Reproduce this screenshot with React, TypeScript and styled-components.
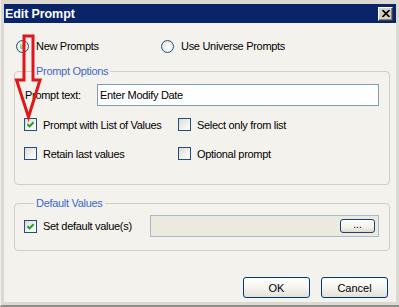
import React from 'react';
import styled, { createGlobalStyle } from 'styled-components';

const GlobalStyle = createGlobalStyle`
  html, body {
    margin: 0;
    padding: 0;
    background: #e6e4de;
  }
  body {
    font-family: "Liberation Sans", Arial, sans-serif;
    font-size: 11px;
    letter-spacing: -0.3px;
    color: #000;
  }
`;

const Frame = styled.div`
  position: relative;
  width: 399px;
  height: 307px;
  box-sizing: border-box;
  padding: 4px 3px 3px 3px;
  display: flex;
  flex-direction: column;
  background: #dcd9d2;
  border-left: 1px solid #eeeeea;
  border-bottom: 2px solid #8f8d88;
`;

const TitleBar = styled.div`
  height: 19px;
  flex: none;
  display: flex;
  align-items: center;
  justify-content: space-between;
  background: #0a246a;
  padding: 0 3px 0 1px;
`;

const Title = styled.span`
  color: #fff;
  font-weight: bold;
  font-size: 12.5px;
  letter-spacing: -0.1px;
`;

const CloseButton = styled.button`
  width: 15px;
  height: 14px;
  padding: 0;
  box-sizing: border-box;
  display: flex;
  align-items: center;
  justify-content: center;
  background: #d4d0c8;
  border: 1px solid;
  border-color: #fff #404040 #404040 #fff;
  box-shadow: inset -1px -1px #808080;
`;

const Body = styled.div`
  flex: 1;
  display: flex;
  flex-direction: column;
  background: #f4f2ed;
  padding: 16px 6px 0 10px;
`;

const RadioRow = styled.div`
  display: grid;
  grid-template-columns: 145px auto;
  height: 14px;
  padding-left: 2px;
`;

const Option = styled.label`
  display: flex;
  align-items: center;
  gap: 7px;
  white-space: nowrap;
`;

const RadioCircle = styled.span<{ $checked?: boolean }>`
  width: 13px;
  height: 13px;
  box-sizing: border-box;
  border-radius: 50%;
  border: 1px solid #1c5180;
  background: radial-gradient(circle at 60% 60%, #ffffff 0%, #e4e2da 80%);
  display: flex;
  align-items: center;
  justify-content: center;
  flex: none;

  &::after {
    content: '';
    display: ${({ $checked }) => ($checked ? 'block' : 'none')};
    width: 5px;
    height: 5px;
    border-radius: 50%;
    background: radial-gradient(circle at 40% 40%, #c8e8a0, #4fa33a);
  }
`;

const Box = styled.span`
  width: 13px;
  height: 13px;
  box-sizing: border-box;
  border: 1px solid #1c5180;
  background: linear-gradient(135deg, #dcdad2 0%, #f7f6f2 70%, #ffffff 100%);
  display: flex;
  align-items: center;
  justify-content: center;
  flex: none;
`;

const GroupBox = styled.fieldset<{ $top: number; $bottom: number }>`
  margin: 0;
  margin-top: ${({ $top }) => $top}px;
  padding: 0 10px ${({ $bottom }) => $bottom}px 9px;
  border: 1px solid #d0d0bf;
  border-radius: 4px;
  min-width: 0;
`;

const Legend = styled.legend`
  margin-left: 10px;
  padding: 0 2px;
  line-height: 13px;
  color: #3d67c9;
`;

const FieldRow = styled.div<{ $label: number; $pad: number }>`
  display: grid;
  grid-template-columns: ${({ $label }) => $label}px 1fr;
  align-items: center;
  margin-top: ${({ $pad }) => $pad}px;
  height: 22px;
`;

const LabelText = styled.span`
  padding-left: 1px;
`;

const TextField = styled.div`
  height: 22px;
  box-sizing: border-box;
  border: 1px solid #7f9db9;
  background: #fff;
  padding: 0 2px;
  display: flex;
  align-items: center;
`;

const DisabledField = styled.div`
  height: 22px;
  box-sizing: border-box;
  border: 1px solid #a9b9c9;
  background: #ece9df;
  padding: 3px;
  display: flex;
  justify-content: flex-end;
`;

const DotsButton = styled.button`
  width: 35px;
  height: 14px;
  box-sizing: border-box;
  padding: 0 0 2px 0;
  border: 1px solid #1e3f6f;
  border-radius: 3px;
  background: linear-gradient(#ffffff, #f2f1ea 60%, #dedbd0);
  font: inherit;
  font-size: 10px;
  line-height: 10px;
  display: flex;
  align-items: flex-end;
  justify-content: center;
`;

const CheckGrid = styled.div`
  display: grid;
  grid-template-columns: 154px 1fr;
  row-gap: 16px;
  margin-top: 12px;
`;

const CheckOption = styled(Option)`
  height: 13px;
  gap: 6px;
`;

const ButtonRow = styled.div`
  display: flex;
  justify-content: flex-end;
  gap: 11px;
  margin-top: 26px;
  margin-right: 2px;
`;

const PushButton = styled.button`
  width: 67px;
  height: 21px;
  box-sizing: border-box;
  border: 1px solid #003c74;
  border-radius: 3px;
  background: linear-gradient(#ffffff 0%, #f5f4ef 50%, #e3e0d6 100%);
  font: inherit;
  color: #000;
  padding: 0;
`;

const ArrowLayer = styled.svg`
  position: absolute;
  left: 0;
  top: 0;
  pointer-events: none;
`;

const Check = () => (
  <svg width="9" height="9" viewBox="0 0 9 9" aria-hidden>
    <path d="M1.5 4.2 L3.6 6.4 L7.6 2.2" fill="none" stroke="#21a121" strokeWidth="2" />
  </svg>
);

const Checkbox = ({ checked, label }: { checked?: boolean; label: string }) => (
  <CheckOption>
    <Box>{checked && <Check />}</Box>
    <span>{label}</span>
  </CheckOption>
);

export default function App() {
  return (
    <>
      <GlobalStyle />
      <Frame>
        <TitleBar>
          <Title>Edit Prompt</Title>
          <CloseButton aria-label="Close">
            <svg width="8" height="7" viewBox="0 0 8 7" aria-hidden>
              <path d="M0.5 0 L7.5 7 M7.5 0 L0.5 7" stroke="#000" strokeWidth="1.6" />
            </svg>
          </CloseButton>
        </TitleBar>
        <Body>
          <RadioRow>
            <Option>
              <RadioCircle $checked />
              <span>New Prompts</span>
            </Option>
            <Option>
              <RadioCircle />
              <span>Use Universe Prompts</span>
            </Option>
          </RadioRow>

          <GroupBox $top={12} $bottom={24}>
            <Legend>Prompt Options</Legend>
            <FieldRow $label={73} $pad={6}>
              <LabelText>Prompt text:</LabelText>
              <TextField>Enter Modify Date</TextField>
            </FieldRow>
            <CheckGrid>
              <Checkbox checked label="Prompt with List of Values" />
              <Checkbox label="Select only from list" />
              <Checkbox label="Retain last values" />
              <Checkbox label="Optional prompt" />
            </CheckGrid>
          </GroupBox>

          <GroupBox $top={12} $bottom={13}>
            <Legend>Default Values</Legend>
            <FieldRow $label={126} $pad={5}>
              <Checkbox checked label="Set default value(s)" />
              <DisabledField>
                <DotsButton>...</DotsButton>
              </DisabledField>
            </FieldRow>
          </GroupBox>

          <ButtonRow>
            <PushButton>OK</PushButton>
            <PushButton>Cancel</PushButton>
          </ButtonRow>
        </Body>

        <ArrowLayer width="60" height="130" viewBox="0 0 60 130" aria-hidden>
          <polygon
            points="23,36 32,36 32,80 39,80 27.5,117 15.5,80 23,80"
            fill="none"
            stroke="#e0161b"
            strokeWidth="3"
            strokeLinejoin="miter"
          />
        </ArrowLayer>
      </Frame>
    </>
  );
}
